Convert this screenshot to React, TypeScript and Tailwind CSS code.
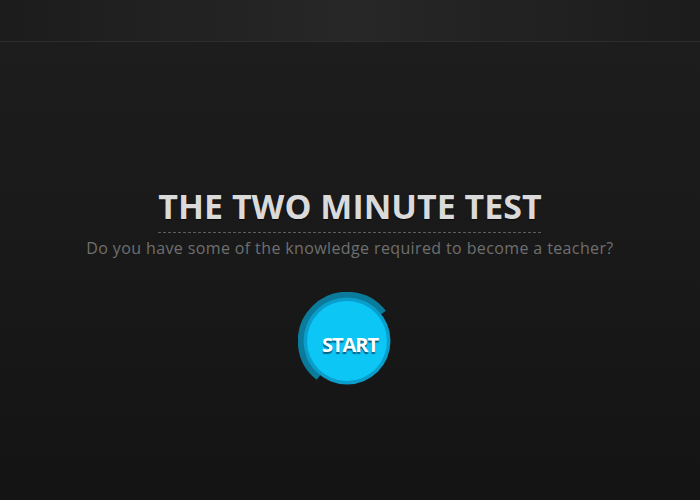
import React from "react";

function StartButton() {
  return (
    <div className="relative w-[104px] h-[98px]">
      <svg width="104" height="98" viewBox="0 0 104 98" className="block">
        <path
          d="M 20.68 85.25 A 46 46 0 1 1 85.25 20.68"
          fill="none"
          stroke="#0a7b9b"
          strokeWidth="6.5"
        />
        <circle cx="49" cy="49" r="43.5" fill="#0a9ecd" />
        <circle cx="49" cy="49" r="40" fill="#0cc6f6" />
      </svg>
      <div
        className="absolute left-[52px] top-[53px] -translate-x-1/2 -translate-y-1/2 text-white font-bold text-[20px] leading-none tracking-[-1px] whitespace-nowrap [text-shadow:0_2px_1px_rgba(0,60,90,0.75)]"
        style={{ fontFamily: '"Open Sans", sans-serif' }}
      >
        START
      </div>
    </div>
  );
}

export default function App() {
  return (
    <div
      className="w-full h-[500px] overflow-hidden bg-gradient-to-b from-[#1e1e1e] to-[#141414] flex flex-col"
      style={{ fontFamily: '"Open Sans", sans-serif' }}
    >
      <header className="h-[42px] shrink-0 bg-gradient-to-r from-[#1c1c1c] via-[#272727] to-[#1c1c1c] border-b border-[#2d2d2d]" />
      <main className="flex flex-col items-center pt-[147px]">
        <div className="flex flex-col items-stretch">
          <h1 className="text-[34px] leading-[34px] font-bold text-[#dadada] pb-[9px] whitespace-nowrap [text-shadow:0_1px_1px_rgba(0,0,0,0.6)]">
            THE TWO MINUTE TEST
          </h1>
          <div className="h-px bg-[repeating-linear-gradient(90deg,#5c5c5c_0_3px,transparent_3px_5px)]" />
        </div>
        <p className="mt-[5px] text-[16px] leading-[20px] tracking-[0.38px] text-[#6f6f6f] whitespace-nowrap">
          Do you have some of the knowledge required to become a teacher?
        </p>
        <div className="mt-[34px]">
          <StartButton />
        </div>
      </main>
    </div>
  );
}
